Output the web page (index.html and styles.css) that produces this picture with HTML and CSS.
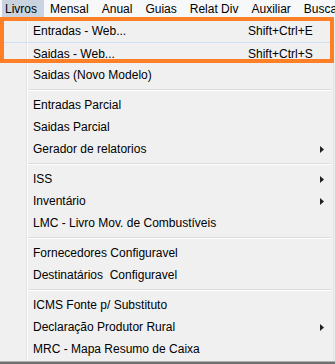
FILE: index.html
```html
<!DOCTYPE html>
<html>
<head>
    <title>Livros</title>
    <link rel="stylesheet" href="styles.css">
</head>
<body>
    <nav class="menubar">
        <span class="top active">Livros</span>
        <span class="top">Mensal</span>
        <span class="top">Anual</span>
        <span class="top">Guias</span>
        <span class="top">Relat Div</span>
        <span class="top">Auxiliar</span>
        <span class="top">Busca</span>
    </nav>
    <section class="dropdown">
        <div class="item"><span class="label">Entradas - Web...</span><span class="key">Shift+Ctrl+E</span></div>
        <div class="item line"><span class="label">Saidas - Web...</span><span class="key">Shift+Ctrl+S</span></div>
        <div class="item"><span class="label">Saidas (Novo Modelo)</span></div>
        <div class="sep"></div>
        <div class="item"><span class="label">Entradas Parcial</span></div>
        <div class="item"><span class="label">Saidas Parcial</span></div>
        <div class="item sub"><span class="label">Gerador de relatorios</span></div>
        <div class="sep"></div>
        <div class="item sub"><span class="label">ISS</span></div>
        <div class="item sub"><span class="label">Inventário</span></div>
        <div class="item"><span class="label">LMC - Livro Mov. de Combustíveis</span></div>
        <div class="sep"></div>
        <div class="item"><span class="label">Fornecedores Configuravel</span></div>
        <div class="item"><span class="label">Destinatários&nbsp; Configuravel</span></div>
        <div class="sep"></div>
        <div class="item"><span class="label">ICMS Fonte p/ Substituto</span></div>
        <div class="item sub"><span class="label">Declaração Produtor Rural</span></div>
        <div class="item"><span class="label">MRC - Mapa Resumo de Caixa</span></div>
        <div class="mark"></div>
    </section>
    <div class="behind"></div>
</body>
</html>
```

FILE: styles.css
```css
* {
    margin: 0;
    padding: 0;
    box-sizing: border-box;
}

body {
    width: 335px;
    height: 364px;
    overflow: hidden;
    background-color: #f0f0f0;
    color: #000;
    font-family: "Liberation Sans", Arial, sans-serif;
    font-size: 12px;
}

.menubar {
    display: flex;
    height: 20px;
    padding-left: 2px;
    background-color: #f7f8fa;
}

.top {
    padding: 1px 7px 0 3px;
    line-height: 16px;
    height: 17px;
    white-space: nowrap;
    margin-right: 3px;
}

.active {
    background-color: #c9d3e0;
}

.dropdown {
    position: relative;
    width: 334px;
    height: 341px;
    border-right: 1px solid #e3e3e3;
    background: linear-gradient(to right, #f0f0f0 26px, #e2e2e2 26px, #e2e2e2 27px, #fff 27px, #fff 28px, #f0f0f0 28px);
}

.item {
    display: flex;
    align-items: center;
    height: 22px;
    padding-left: 33px;
    white-space: nowrap;
}

.item.line {
    border-top: 1px solid #cfe0f2;
}

.label {
    flex: 1;
}

.key {
    width: 85px;
}

.item.sub {
    background: url("data:image/svg+xml,%3Csvg xmlns='http://www.w3.org/2000/svg' width='4' height='7'%3E%3Cpath d='M0 0L4 3.5L0 7Z' fill='%23222'/%3E%3C/svg%3E") no-repeat 320px center;
}

.sep {
    height: 8px;
    margin-left: 28px;
    margin-right: 2px;
    background: linear-gradient(to bottom, transparent 3px, #dcdcdc 3px, #dcdcdc 4px, #fff 4px, #fff 5px, transparent 5px);
}

.mark {
    position: absolute;
    left: 0;
    top: -3px;
    width: 334px;
    height: 46px;
    border: 4px solid #ff7f27;
}

.behind {
    height: 3px;
    border-top: 1px solid #b0b0b0;
    background-color: #707070;
}
```
